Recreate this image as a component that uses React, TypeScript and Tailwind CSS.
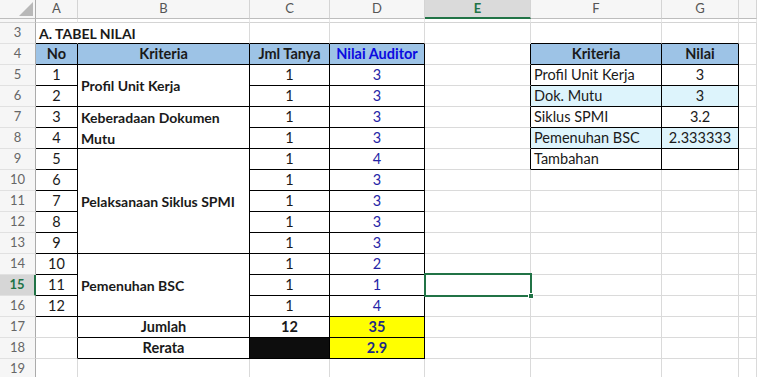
import clsx from "clsx";
import { twMerge } from "tailwind-merge";
import type { FC, ReactNode } from "react";

interface CellProps {
  children?: ReactNode;
  className?: string;
  r?: "k" | "n";
  b?: "k";
  center?: boolean;
}

// one spreadsheet cell; right/bottom edges are the gridlines, "k" turns them black
const Cell: FC<CellProps> = ({ children, className, r, b, center }) => (
  <div
    className={twMerge(
      clsx(
        "flex items-center border-r border-b px-[3px] whitespace-nowrap text-[14.5px] text-[#1a1a1a]",
        r === "k" ? "border-r-black" : r === "n" ? "border-r-transparent" : "border-r-[#dadada]",
        b === "k" ? "border-b-black" : "border-b-[#dadada]",
        center && "justify-center",
        className,
      ),
    )}
  >
    {children}
  </div>
);

const RowHead: FC<{ n: number; active?: boolean }> = ({ n, active }) => (
  <div
    className={clsx(
      "flex items-center justify-center border-b border-b-[#e1e1e1] text-[13px]",
      active
        ? "border-r-2 border-r-[#217346] bg-[#d6d6d6] font-bold text-[#217346]"
        : "border-r border-r-[#ababab] bg-[#f6f6f6] text-[#666]",
    )}
  >
    {n}
  </div>
);

const ColHead: FC<{ label?: string; active?: boolean }> = ({ label, active }) => (
  <div
    className={clsx(
      "flex items-center justify-center border-r border-r-[#d4d4d4] text-[13px]",
      active
        ? "border-b-2 border-b-[#217346] bg-[#dadada] font-bold text-[#217346]"
        : "border-b border-b-[#bdbdbd] bg-[#f6f6f6] text-[#555]",
    )}
  >
    {label}
  </div>
);

const Blank: FC<{ r?: "k" | "n"; b?: "k" }> = ({ r, b }) => <Cell r={r} b={b} />;

const Num: FC<{ v: string | number; b?: "k"; className?: string }> = ({ v, b, className }) => (
  <Cell r="k" b={b ?? "k"} center className={className}>
    {v}
  </Cell>
);

const Score: FC<{ v: number | string }> = ({ v }) => (
  <Cell r="k" b="k" center className="text-[#2424a6]">
    {v}
  </Cell>
);

const HEAD = "bg-[#9dc3e6] font-bold";
const CYAN = "bg-[#ddf4fc]";
const CRIT = "text-[14px] font-bold";

export default function App() {
  const cols = ["A", "B", "C", "D", "E", "F", "G", ""];

  return (
    <div className="h-[377px] w-[757px] overflow-hidden bg-white font-[family-name:Lato,'Liberation_Sans',sans-serif]">
      <div className="grid grid-cols-[36px_42px_172px_80px_95px_106px_131px_77px_18px] grid-rows-[19px_4px_repeat(17,21px)]">
        {/* column headers */}
        <div className="relative border-r border-b border-r-[#ababab] border-b-[#bdbdbd] bg-[#f6f6f6]">
          <svg className="absolute right-[2px] bottom-[2px]" width="14" height="14" viewBox="0 0 14 14">
            <polygon points="14,0 14,14 0,14" fill="#b8b8b8" />
          </svg>
        </div>
        {cols.map((c, i) => (
          <ColHead key={i} label={c} active={c === "E"} />
        ))}

        {/* frozen strip */}
        <div className="border-r border-b border-r-[#ababab] border-b-[#d4d4d4] bg-[#f6f6f6]" />
        {cols.map((_, i) => (
          <div key={i} className="border-r border-b border-r-[#e6e6e6] border-b-[#d4d4d4]" />
        ))}

        {/* row 3 */}
        <RowHead n={3} />
        <Cell r="n" b="k" className="relative z-10 text-[14px] font-bold">A. TABEL NILAI</Cell>
        <Blank b="k" />
        <Blank b="k" />
        <Blank b="k" />
        <Blank />
        <Blank b="k" />
        <Blank b="k" />
        <Blank />

        {/* row 4 */}
        <RowHead n={4} />
        <Cell r="k" b="k" center className={HEAD}>No</Cell>
        <Cell r="k" b="k" center className={HEAD}>Kriteria</Cell>
        <Cell r="k" b="k" center className={HEAD}>Jml Tanya</Cell>
        <Cell r="k" b="k" center className={clsx(HEAD, "text-[#0b0be0]")}>Nilai Auditor</Cell>
        <Blank r="k" />
        <Cell r="k" b="k" center className={HEAD}>Kriteria</Cell>
        <Cell r="k" b="k" center className={HEAD}>Nilai</Cell>
        <Blank />

        {/* row 5 */}
        <RowHead n={5} />
        <Num v={1} />
        <Cell r="k" b="k" className={clsx("row-span-2", CRIT)}>Profil Unit Kerja</Cell>
        <Num v={1} />
        <Score v={3} />
        <Blank r="k" />
        <Cell r="k" b="k">Profil Unit Kerja</Cell>
        <Num v={3} />
        <Blank />

        {/* row 6 */}
        <RowHead n={6} />
        <Num v={2} />
        <Num v={1} />
        <Score v={3} />
        <Blank r="k" />
        <Cell r="k" b="k" className={CYAN}>Dok. Mutu</Cell>
        <Num v={3} className={CYAN} />
        <Blank />

        {/* row 7 */}
        <RowHead n={7} />
        <Num v={3} />
        <Cell r="k" b="k" className={clsx("row-span-2 leading-[21px]", CRIT)}>
          Keberadaan Dokumen
          <br />
          Mutu
        </Cell>
        <Num v={1} />
        <Score v={3} />
        <Blank r="k" />
        <Cell r="k" b="k">Siklus SPMI</Cell>
        <Num v="3.2" />
        <Blank />

        {/* row 8 */}
        <RowHead n={8} />
        <Num v={4} />
        <Num v={1} />
        <Score v={3} />
        <Blank r="k" />
        <Cell r="k" b="k" className={CYAN}>Pemenuhan BSC</Cell>
        <Num v="2.333333" className={CYAN} />
        <Blank />

        {/* row 9 */}
        <RowHead n={9} />
        <Num v={5} />
        <Cell r="k" b="k" className={clsx("row-span-5", CRIT)}>Pelaksanaan Siklus SPMI</Cell>
        <Num v={1} />
        <Score v={4} />
        <Blank r="k" />
        <Cell r="k" b="k">Tambahan</Cell>
        <Num v="" />
        <Blank />

        {/* rows 10 - 13 */}
        {[6, 7, 8, 9].map((n) => (
          <div key={n} className="contents">
            <RowHead n={n + 4} />
            <Num v={n} />
            <Num v={1} />
            <Score v={3} />
            <Blank />
            <Blank />
            <Blank />
            <Blank />
          </div>
        ))}

        {/* row 14 */}
        <RowHead n={14} />
        <Num v={10} />
        <Cell r="k" b="k" className={clsx("row-span-3", CRIT)}>Pemenuhan BSC</Cell>
        <Num v={1} />
        <Score v={2} />
        <Blank />
        <Blank />
        <Blank />
        <Blank />

        {/* row 15, E15 selected */}
        <RowHead n={15} active />
        <Num v={11} />
        <Num v={1} />
        <Score v={1} />
        <div className="relative border-r border-b border-r-[#dadada] border-b-[#dadada]">
          <div className="absolute top-[-2px] left-[-1px] z-10 h-[24px] w-[108px] border-2 border-[#217346]" />
          <div className="absolute top-[18px] left-[103px] z-20 size-[6px] border border-white bg-[#217346]" />
        </div>
        <Blank />
        <Blank />
        <Blank />

        {/* row 16 */}
        <RowHead n={16} />
        <Num v={12} />
        <Num v={1} />
        <Score v={4} />
        <Blank />
        <Blank />
        <Blank />
        <Blank />

        {/* row 17 */}
        <RowHead n={17} />
        <Blank r="k" />
        <Cell r="k" b="k" center className="font-bold">Jumlah</Cell>
        <Cell r="k" b="k" center className="font-bold">12</Cell>
        <Cell r="k" b="k" center className="bg-[#ffff00] font-bold text-[#1c2a85]">35</Cell>
        <Blank />
        <Blank />
        <Blank />
        <Blank />

        {/* row 18 */}
        <RowHead n={18} />
        <Blank r="k" />
        <Cell r="k" b="k" center className="font-bold">Rerata</Cell>
        <Cell r="k" b="k" className="bg-[#0d0d0d]" />
        <Cell r="k" b="k" center className="bg-[#ffff00] font-bold text-[#1c2a85]">2.9</Cell>
        <Blank />
        <Blank />
        <Blank />
        <Blank />

        {/* row 19 */}
        <RowHead n={19} />
        <Blank />
        <Blank />
        <Blank />
        <Blank />
        <Blank />
        <Blank />
        <Blank />
        <Blank />
      </div>
    </div>
  );
}
